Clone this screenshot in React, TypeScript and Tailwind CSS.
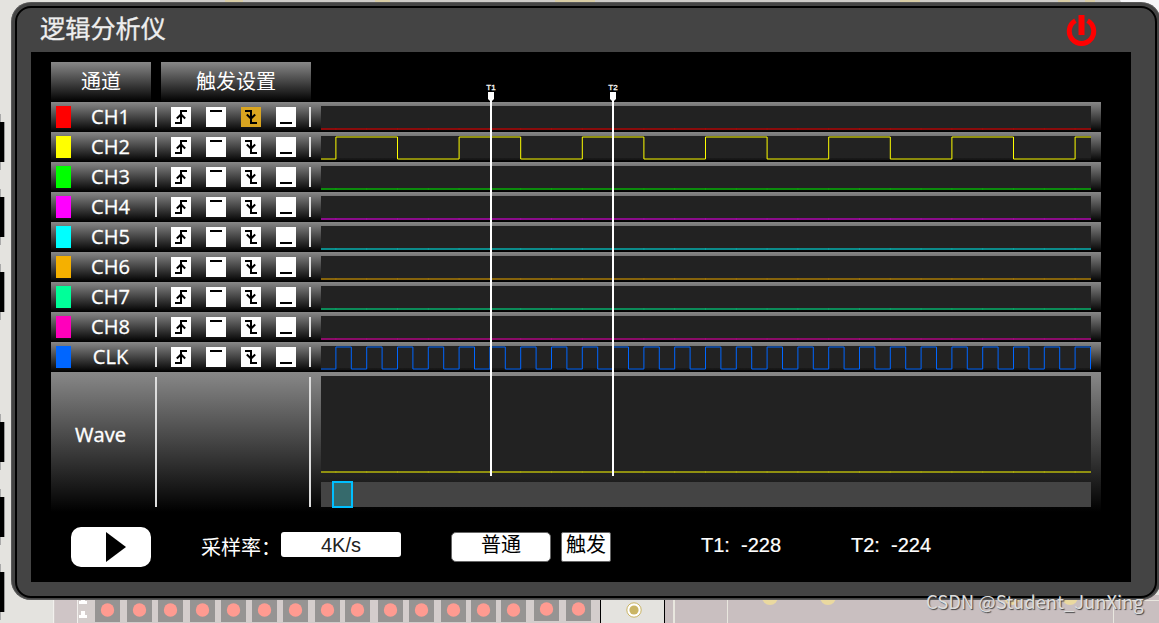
const CHANNELS = [
  { name: "CH1", swatch: "bg-[#ff0000]", stroke: "#ff0000" },
  { name: "CH2", swatch: "bg-[#ffff00]", stroke: "#ffff00" },
  { name: "CH3", swatch: "bg-[#00ff00]", stroke: "#00ff00" },
  { name: "CH4", swatch: "bg-[#ff00ff]", stroke: "#ff00ff" },
  { name: "CH5", swatch: "bg-[#00ffff]", stroke: "#00ffff" },
  { name: "CH6", swatch: "bg-[#f5b000]", stroke: "#f5b000" },
  { name: "CH7", swatch: "bg-[#00ff99]", stroke: "#00ff99" },
  { name: "CH8", swatch: "bg-[#ff00bb]", stroke: "#ff00bb" },
  { name: "CLK", swatch: "bg-[#0066ff]", stroke: "#0066ff" },
];

const TRIGGERS = ["rising", "high", "falling", "low"] as const;
type Trigger = (typeof TRIGGERS)[number];

const TRIGGER_PATHS: Record<Trigger, string> = {
  rising: "M4 16H10V4H16M5.8 11.5L10 7.5L14.2 11.5",
  high: "M4 4H16",
  falling: "M4 4H10V16H16M5.8 7.5L10 11.5L14.2 7.5",
  low: "M4 16H16",
};

// trace geometry in px
const FIRST_EDGE = 14.9;
const TICK = 30.8;
const TRACE_WIDTH = 770;

const LED_X = [95, 127, 158, 190, 221, 252, 283, 315, 345, 378, 409, 441, 471, 501, 534, 566];
const SOCKET_Y = [122, 197, 272, 422, 497, 572];

function squarePath(half: number, high: number, low: number) {
  let d = `M0 ${low}`;
  let level = low;
  for (let x = FIRST_EDGE; x < TRACE_WIDTH; x += half) {
    level = level === low ? high : low;
    d += `H${x.toFixed(2)}V${level}`;
  }
  return `${d}H${TRACE_WIDTH}`;
}

function ticksPath(y: number) {
  let d = "";
  for (let x = FIRST_EDGE; x < TRACE_WIDTH; x += TICK) {
    d += `M${(x - 0.5).toFixed(2)} ${y}h1`;
  }
  return d;
}

function TriggerButton({ type, active }: { type: Trigger; active: boolean }) {
  return (
    <button type="button" className={`size-5 ${active ? "bg-[#daa520]" : "bg-white"}`}>
      <svg viewBox="0 0 20 20" className="block size-5" fill="none" stroke="black" strokeWidth="2">
        <path d={TRIGGER_PATHS[type]} />
      </svg>
    </button>
  );
}

function Trace({ name, stroke }: { name: string; stroke: string }) {
  let d = `M0 23H${TRACE_WIDTH}`;
  if (name === "CH2") d = squarePath(61.6, 1, 23);
  if (name === "CLK") d = squarePath(15.4, 1, 23);
  return (
    <svg width="770" height="24" className="block" fill="none" stroke={stroke} strokeWidth="1">
      <rect width="770" height="24" fill="#222" fillOpacity="0.5" stroke="none" />
      <rect width="770" height="22" fill="#222" stroke="none" />
      <path d={d} />
      {name !== "CLK" && name !== "CH2" && <path d={ticksPath(23)} strokeOpacity="0.4" />}
    </svg>
  );
}

function ChannelRow({ channel }: { channel: (typeof CHANNELS)[number] }) {
  return (
    <div className="flex h-[30px] bg-linear-to-b/srgb from-[#888] to-black">
      <div className="ml-[5px] mt-1 h-[22px] w-[15px]">
        <div className={`h-full w-full ${channel.swatch}`} />
      </div>
      <div className="w-[84px] pr-[5px] text-center font-['Open_Sans',sans-serif] text-xl leading-[29px] [-webkit-text-stroke:0.3px_white]">{channel.name}</div>
      <div className="mt-[5px] h-5 w-0.5 bg-[#ddd]" />
      <div className="mx-3.5 mt-[5px] flex h-5 w-[124px] gap-[15px]">
        {TRIGGERS.map((t) => (
          <TriggerButton key={t} type={t} active={channel.name === "CH1" && t === "falling"} />
        ))}
      </div>
      <div className="mt-[5px] h-5 w-0.5 bg-[#ddd]" />
      <div className="ml-2.5 mt-1">
        <Trace name={channel.name} stroke={channel.stroke} />
      </div>
    </div>
  );
}

function WaveRow() {
  return (
    <div className="flex h-[140px] bg-linear-to-b/srgb from-[#888] to-black">
      <div className="w-[104px] pr-[5px] pt-[49px] text-center font-['Open_Sans',sans-serif] text-xl leading-[28px] [-webkit-text-stroke:0.4px_white]">Wave</div>
      <div className="mt-[5px] h-[130px] w-0.5 bg-[#ddd]" />
      <div className="ml-[152px] mt-[5px] h-[130px] w-0.5 bg-[#ddd]" />
      <div className="ml-2.5 mt-1 w-[770px]">
        <svg width="770" height="106" className="block" fill="none" stroke="#ffff00">
          <rect width="770" height="100" fill="#222" stroke="none" />
          <path d="M0 96H770" />
          <path d={ticksPath(96)} strokeOpacity="0.4" />
        </svg>
        <div className="relative h-[25px] bg-[#444]">
          <div className="absolute -top-px left-[11px] h-[27px] w-[21px] border-2 border-[#00bfff] bg-[#366a6c]" />
        </div>
      </div>
    </div>
  );
}

function Cursor({ label, className }: { label: string; className: string }) {
  return (
    <div className={`absolute top-[32px] flex w-5 flex-col items-center ${className}`}>
      <span className="h-2 font-['Liberation_Sans',sans-serif] text-[8px] leading-2 [-webkit-text-stroke:0.3px_white]">{label}</span>
      <svg width="6" height="9" className="block">
        <path d="M0 0H6V7L4 9H2L0 7Z" fill="white" />
      </svg>
      <div className="h-[375px] w-0.5 bg-white" />
    </div>
  );
}

function Controls() {
  return (
    <div className="flex items-start pl-5 pt-[15px] text-xl leading-[26px]">
      <button type="button" className="flex h-10 w-20 items-center rounded-[10px] bg-white pl-[35px]">
        <svg width="20" height="30"><path d="M0 0L20 15L0 30Z" fill="black" /></svg>
      </button>
      <span className="ml-[50px] mt-[7px] w-20">采样率：</span>
      <div className="mt-[5px] h-[25px] w-[120px] rounded-[3px] bg-white text-center font-['Liberation_Sans',sans-serif] text-[#222]">4K/s</div>
      <button type="button" className="ml-[50px] mt-[5px] h-[30px] w-[100px] rounded-[5px] border border-[#666] bg-white pb-1.5 leading-[22px] text-black">普通</button>
      <button type="button" className="ml-2.5 mt-[5px] h-[30px] w-[50px] rounded-[2px] border border-[#666] bg-white pb-1.5 leading-[22px] text-black">触发</button>
      <div className="ml-[90px] mt-[5px] w-[150px] font-['Liberation_Sans',sans-serif] [-webkit-text-stroke:0.2px_white]">T1:&nbsp; -228</div>
      <div className="mt-[5px] font-['Liberation_Sans',sans-serif] [-webkit-text-stroke:0.2px_white]">T2:&nbsp; -224</div>
    </div>
  );
}

// circuit board behind the instrument window
function Board() {
  return (
    <svg width="1159" height="623" className="absolute inset-0">
      <rect width="1159" height="623" fill="#e4e3df" />
      <path d="M160 0H1159V8H160Z" fill="#cdcbc8" />
      <path d="M225 0h18M375 0h15M555 0h40M900 0h20M1058 0h12M1085 0h10" stroke="#d9cda5" strokeWidth="8" />
      <path d="M1120 0H1159V40H1140Z" fill="#f7f7f9" />
      {SOCKET_Y.map((y) => (
        <g key={y}>
          <rect y={y - 8} width="1" height="56" fill="#aaa" />
          <rect y={y} width="4" height="40" fill="black" />
          <rect x="4" y={y} width="1" height="40" fill="#999" />
        </g>
      ))}
      <rect x="53" y="595" width="547" height="28" fill="#d4cdcc" />
      <rect x="55" y="595" width="22" height="28" fill="#cfc5c6" />
      <path d="M53.5 595V623M77.5 595V623" stroke="#f2f0ed" />
      <path d="M79 604h8v-3h-2v-3h-4v3h-2zM79 618h8v-3h-2v-4h-4v4h-2z" fill="white" />
      {LED_X.map((x) => (
        <g key={x}>
          <rect x={x} y="597" width="25" height={x > 530 ? 24 : 25} fill="#969493" />
          <circle cx={x + 12.5} cy={x > 530 ? 609 : 610} r="6.7" fill="#ff9b91" />
        </g>
      ))}
      <path d="M600.5 595V623M664.5 595V623" stroke="black" />
      <circle cx="634" cy="610" r="7.2" fill="white" stroke="#cab565" />
      <circle cx="634" cy="610" r="4.6" fill="#cab565" />
      <rect x="665" y="595" width="494" height="28" fill="#c9bfc0" />
      <path d="M674 595V623" stroke="#e9e7df" strokeWidth="2" />
      <path d="M727.5 595V623M1113.5 602V623M1100 600.5H1159" stroke="#e9e7df" />
      <g fill="#ead9a0">
        <circle cx="770" cy="597" r="8" />
        <circle cx="828" cy="597" r="8" />
        <circle cx="1012" cy="597" r="8" />
        <circle cx="1070" cy="597" r="8" />
      </g>
    </svg>
  );
}

export default function App() {
  return (
    <div className="relative h-[623px] w-[1159px] overflow-hidden bg-[#e4e3df] font-['Noto_Sans_CJK_SC',sans-serif] text-white">
      <Board />
      <div className="relative ml-[11px] mt-[2px] h-[598px] w-[1150px] rounded-[20px] bg-[#444] pl-1 pt-1 outline outline-[#777]/40 -outline-offset-1">
        <div className="h-[592px] w-[1142px] rounded-[16px] border-2 border-black bg-[#444] px-3.5">
          <header className="flex h-11 items-start justify-between pl-[9px] pr-[44px]">
            <h1 className="text-[25.2px] leading-[38px] text-[#eee] [-webkit-text-stroke:0.3px_#eee]">逻辑分析仪</h1>
            <button type="button" className="mt-[6px]">
              <svg width="31" height="32" viewBox="0 0 31 32" className="block" fill="none" stroke="#ff0000">
                <path d="M9.4 6.7A12.2 12.2 0 1 0 21.6 6.7" strokeWidth="5" />
                <path d="M15.5 1V21" strokeWidth="6" />
              </svg>
            </button>
          </header>
          <main className="relative h-[530px] w-[1100px] bg-black px-5 pt-2.5">
            <div className="flex h-10 gap-2.5 text-center text-xl leading-[37px]">
              <div className="w-[100px] bg-linear-to-b/srgb from-[#888] to-black">通道</div>
              <div className="w-[150px] bg-linear-to-b/srgb from-[#888] to-black">触发设置</div>
            </div>
            <div className="w-[1050px]">
              {CHANNELS.map((c) => (
                <ChannelRow key={c.name} channel={c} />
              ))}
              <WaveRow />
            </div>
            <Controls />
            <Cursor label="T1" className="left-[450px]" />
            <Cursor label="T2" className="left-[572px]" />
          </main>
        </div>
      </div>
      <div className="absolute left-[926px] top-[588px] whitespace-nowrap text-[18.4px] leading-[26px] text-[#ddd] [text-shadow:1px_1px_1px_#444]">
        CSDN @Student_JunXing
      </div>
    </div>
  );
}
